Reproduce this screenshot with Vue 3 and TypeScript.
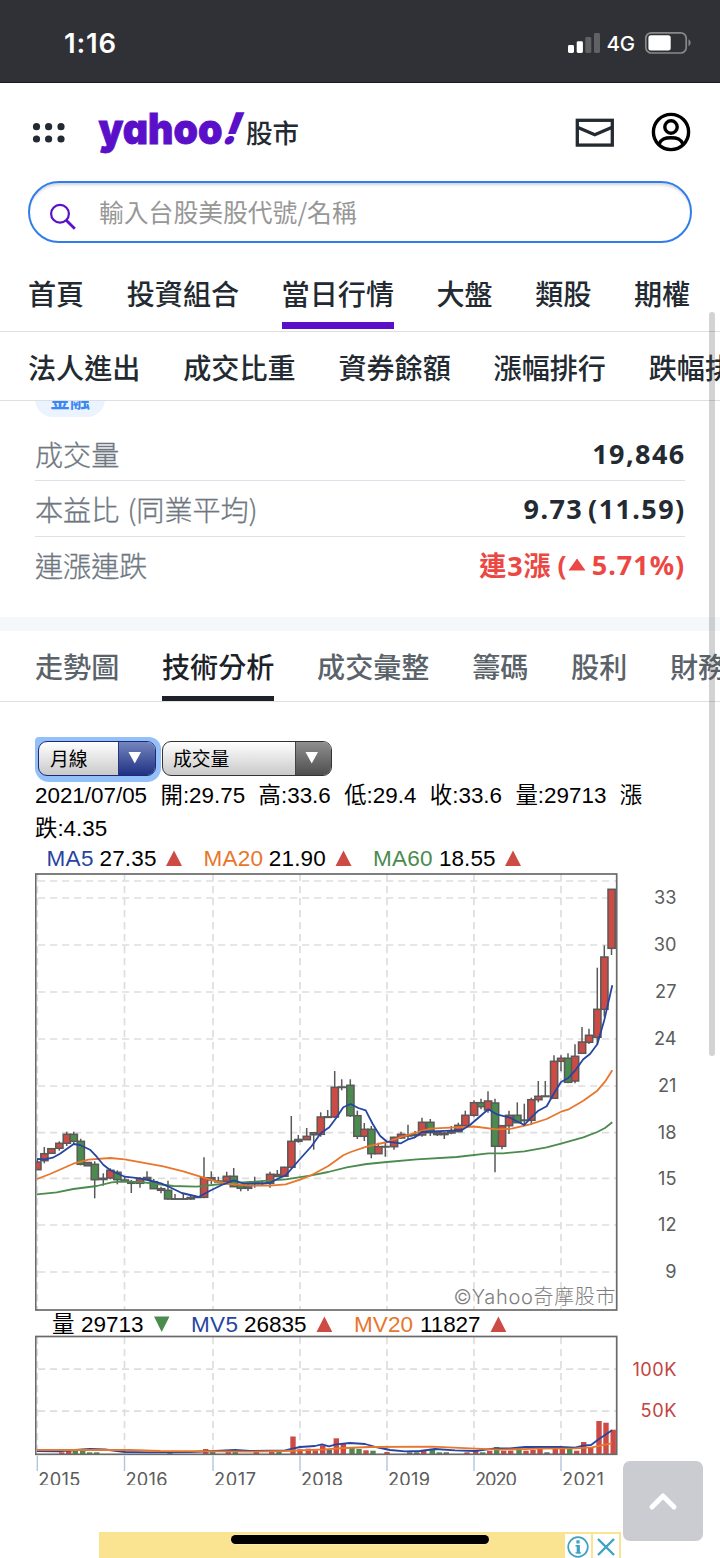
<script setup lang="ts">
type Tone = 'r' | 'g' | 'n'
interface Tab { label: string; active?: boolean }

const mainNav: Tab[] = [
  { label: '首頁' }, { label: '投資組合' }, { label: '當日行情', active: true },
  { label: '大盤' }, { label: '類股' }, { label: '期權' },
]
const subNav: string[] = ['法人進出', '成交比重', '資券餘額', '漲幅排行', '跌幅排行']
const tabs: Tab[] = [
  { label: '走勢圖' }, { label: '技術分析', active: true }, { label: '成交彙整' },
  { label: '籌碼' }, { label: '股利' }, { label: '財務' },
]

const fills: Record<Tone, string> = { r: '#cc4b45', g: '#4b8b4e', n: '#666' }

// x, body top, body bottom, high, low, tone
const candles: [number, number, number, number, number, Tone][] = [
  [37.3, 1162, 1169.7, 1160, 1170, 'r'], [44.3, 1153.7, 1160.7, 1147, 1163.3, 'r'], [51.3, 1148.7, 1153.3, 1148, 1154, 'r'],
  [59.3, 1143.3, 1148.3, 1141.3, 1150.7, 'r'], [66.7, 1134.3, 1143.3, 1131.7, 1146, 'r'], [73.7, 1134.3, 1141.3, 1131.7, 1144, 'g'],
  [80.7, 1141.3, 1164.3, 1138.7, 1165.3, 'g'], [87.7, 1162.5, 1165.8, 1162, 1166, 'n'], [94.7, 1164.3, 1179.7, 1161.3, 1198.3, 'g'],
  [103.3, 1178.3, 1179.5, 1173.3, 1185.7, 'n'], [110.3, 1170.3, 1178, 1168.3, 1179.3, 'r'], [117.3, 1172.3, 1179.7, 1170.3, 1184.3, 'g'],
  [124.7, 1180, 1181.7, 1177, 1182, 'n'], [131.3, 1181.7, 1183.3, 1180, 1193, 'n'], [140, 1178.7, 1183.3, 1177.3, 1187.7, 'r'],
  [147, 1177.5, 1179.3, 1171.3, 1180, 'n'], [153.7, 1181.7, 1188.7, 1179, 1189, 'g'], [161, 1188.7, 1190.3, 1186.7, 1193.3, 'n'],
  [168, 1190.3, 1199, 1180.7, 1200, 'g'], [175, 1198.8, 1199.2, 1194, 1200, 'n'], [183.3, 1198.8, 1199.2, 1193, 1200, 'n'],
  [190.7, 1197.5, 1199, 1194.7, 1200, 'n'], [197.3, 1197, 1197.5, 1196.5, 1198, 'n'], [204, 1177.7, 1197.3, 1157.3, 1198.3, 'r'],
  [211.3, 1177.8, 1180, 1171.3, 1184, 'n'], [218.3, 1181, 1182, 1176.7, 1183, 'n'], [226.7, 1176.3, 1181.3, 1171.7, 1182, 'r'],
  [233.7, 1176.3, 1186.7, 1168, 1187, 'g'], [240.7, 1185.3, 1188.3, 1184, 1191.3, 'g'], [248, 1185.3, 1188.3, 1184, 1191, 'n'],
  [254.7, 1182.9, 1183.5, 1176.7, 1187.7, 'n'], [262.3, 1183, 1183.4, 1180.3, 1184.7, 'n'], [270, 1174.3, 1183.5, 1171.7, 1187.7, 'r'],
  [277.3, 1174.5, 1176.5, 1170, 1177, 'n'], [284.3, 1167.3, 1176.3, 1166.7, 1177, 'r'], [291.3, 1141.3, 1167.3, 1116, 1168.3, 'r'],
  [298.3, 1139.5, 1141.3, 1135, 1142.7, 'n'], [306.7, 1136.3, 1139.7, 1128, 1140, 'r'], [313.7, 1132.7, 1134.8, 1132, 1149.7, 'n'],
  [320.7, 1117, 1134.3, 1112.3, 1136.7, 'r'], [327.7, 1116.8, 1117.4, 1110, 1118, 'n'], [334.7, 1087.3, 1117, 1071, 1118, 'r'],
  [341.7, 1087, 1087.5, 1079.3, 1090.3, 'n'], [350.3, 1085.3, 1115.7, 1079.3, 1117, 'g'], [357.3, 1115.7, 1136.3, 1110.7, 1139, 'g'],
  [364.3, 1129.3, 1136.3, 1123, 1141, 'r'], [371.3, 1129.3, 1153.7, 1126, 1158.3, 'g'], [378.3, 1146.7, 1153.7, 1142.7, 1154, 'r'],
  [385.3, 1146.5, 1147, 1142, 1156.7, 'n'], [394, 1137.3, 1146.7, 1136.7, 1149.7, 'r'], [401, 1134.3, 1138, 1131.7, 1139, 'r'],
  [408, 1135, 1136, 1124.7, 1139.3, 'n'], [415, 1134.3, 1135.5, 1131, 1137, 'n'], [422, 1122.3, 1135, 1117.7, 1136.7, 'r'],
  [430.3, 1122.3, 1132.7, 1119, 1136, 'g'], [437.3, 1132.8, 1134.6, 1132, 1136, 'n'], [444.3, 1133, 1134.6, 1132, 1139, 'n'],
  [451.3, 1130.8, 1133, 1126, 1134.3, 'n'], [458.3, 1125.3, 1131.7, 1122.7, 1132, 'r'], [465.3, 1115.3, 1125.7, 1110.7, 1126, 'r'],
  [474, 1102.7, 1115.3, 1100.3, 1116.7, 'r'], [481, 1102.7, 1106.7, 1098.7, 1109.3, 'g'], [488, 1101, 1110, 1091.3, 1112.7, 'r'],
  [495, 1103, 1146.3, 1098.7, 1172.3, 'g'], [502, 1125.7, 1146.3, 1125, 1149.3, 'r'], [509, 1115.3, 1125.7, 1110.7, 1134, 'r'],
  [517.3, 1115.3, 1122.7, 1102.3, 1123, 'g'], [524.3, 1120, 1120.6, 1103.7, 1125, 'n'], [531.3, 1099.7, 1120.3, 1097.7, 1125, 'r'],
  [538.3, 1096.3, 1099.7, 1081, 1102.3, 'r'], [545.3, 1096, 1096.6, 1081, 1097, 'n'], [554, 1061.3, 1098.3, 1055.3, 1099, 'r'],
  [561, 1058.3, 1061.3, 1055.3, 1071.3, 'r'], [568, 1058.3, 1082.3, 1053.3, 1083.3, 'g'], [575, 1056.3, 1081, 1044.3, 1083.3, 'r'],
  [582, 1042, 1053.3, 1027, 1054, 'r'], [589, 1035.3, 1042.3, 1028.7, 1044, 'r'], [597.3, 1009.3, 1037.3, 967.7, 1044, 'r'],
  [604.3, 957, 1009.3, 945.3, 1016.7, 'r'], [611.5, 889.3, 948.3, 889, 955, 'r'],
]

const ma5 = '37,1159 45,1159.3 52.7,1157.7 60,1153.7 73.7,1144 80,1145 90,1149.7 96.7,1156.7 103.3,1164.7 110.3,1170.3 124.7,1176.7 140,1178.3 151.7,1181 161,1183.3 168,1186.3 181.7,1193 198.7,1197 210,1190.7 221.7,1185 233.7,1180.3 243.3,1183.3 263.3,1183.7 270,1182.7 277.3,1179 285.7,1175.3 300,1159 311.7,1146 320.7,1133.3 329.3,1127.3 336,1118.3 343.3,1107.3 350.7,1104 358.3,1108 365.7,1110.3 372.7,1124 380,1135.7 387,1141.7 401,1143.3 408.3,1139.3 415,1137.3 422,1132 450,1130.7 462,1130 470,1125 488.3,1109.3 496.7,1114.3 510,1117.7 524.3,1125 531.3,1117.3 538.3,1110.7 546.7,1106.3 554,1093.3 561,1082 568,1078.3 575,1070.7 583.3,1059.3 590,1054 597.3,1044.3 604.3,1020 612.3,985.3'
const ma20 = '37,1179 50,1174 73.3,1163.7 88.3,1159.7 110.3,1158 124.7,1159.3 163.3,1166.3 183.3,1171.3 216.7,1181.7 230,1184 250,1185.7 270,1185.7 285.7,1184.3 300,1179.7 311.7,1175 328.3,1166 343.3,1155.3 350.7,1152 366.7,1146.7 387,1142 401,1137 430,1128.7 450,1127.7 474,1126.5 496.7,1129.3 511.7,1128.7 530,1124.3 546.7,1119 561,1111.7 568,1109.7 583.3,1100.7 597.3,1090.7 605,1081.7 612.3,1070.3'
const ma60 = '37,1194.3 56.7,1192.3 73.3,1189 96.7,1186 111.7,1182.3 124.7,1181.3 143.3,1182.3 173.3,1186 196.7,1186.7 221.7,1184 240,1182.7 250,1182 285.7,1179.3 310,1175.7 328.3,1172 346.7,1167.3 366.7,1164 387,1162 416.7,1159.3 456.7,1157 488.3,1153.3 503.3,1153.3 524.3,1151.3 546.7,1147.3 561,1143.7 583.3,1137.3 597.3,1132 605,1128 612.3,1122.3'

// x, bar top, tone
const volumes: [number, number, Tone][] = [
  [61.7, 1452.3, 'r'], [68.7, 1450.7, 'r'], [75.3, 1450.3, 'g'], [82.7, 1450.3, 'g'], [89.7, 1452.3, 'g'], [96.7, 1452.3, 'g'],
  [170, 1452.5, 'g'], [205.7, 1449, 'r'], [212.7, 1452, 'g'], [228.3, 1452, 'r'], [235.3, 1451.5, 'g'], [256.3, 1451.7, 'r'],
  [271.7, 1451.7, 'r'], [279, 1451.7, 'g'], [293, 1436.5, 'r'], [300, 1449.3, 'r'], [308.3, 1448.7, 'r'], [315.3, 1450.3, 'r'],
  [322.7, 1445.3, 'r'], [329.3, 1449.7, 'n'], [336.3, 1438.3, 'r'], [343.3, 1443.7, 'r'], [352, 1448, 'g'], [359, 1449, 'g'],
  [366, 1450.3, 'r'], [373, 1450.7, 'g'], [387, 1452, 'r'], [409.7, 1452.3, 'n'], [416.7, 1452.3, 'n'], [423.7, 1451, 'r'],
  [432.3, 1449.7, 'g'], [439.3, 1452.3, 'g'], [446.3, 1452.3, 'n'], [467, 1452.3, 'r'], [475.7, 1451, 'r'], [482.7, 1452.3, 'g'],
  [489.7, 1450.7, 'r'], [496.7, 1447, 'g'], [503.7, 1450.7, 'r'], [510.7, 1450.7, 'r'], [519, 1447.7, 'g'], [526, 1450.7, 'r'],
  [533, 1450, 'r'], [540, 1449, 'r'], [547, 1452.3, 'n'], [555.3, 1449, 'r'], [562.3, 1448.7, 'r'], [569.7, 1448.7, 'g'],
  [576.7, 1450.7, 'r'], [583.7, 1442, 'r'], [590.7, 1447, 'r'], [599, 1421, 'r'], [606, 1422.7, 'r'], [613.2, 1429.7, 'r'],
]
const mv5 = '37,1451 58,1451.3 75,1450 90,1449 105,1449.5 125,1452 150,1452.3 190,1452 215,1451 235,1450 250,1451 285,1450.3 300,1447 315,1446 322,1444.3 329,1446.3 336,1444.3 350,1443 365,1444 376,1447 390,1450 405,1451.3 420,1451 435,1449 455,1450.3 475,1451 495,1448.3 510,1448.3 525,1447 560,1447 575,1447.7 583,1445.7 591,1445 599,1439 612,1430.3'
const mv20 = '37,1450 130,1450 160,1451 250,1451.7 285,1451 325,1449.3 345,1448 370,1447 432,1446.7 470,1448.3 500,1449.7 540,1448.7 575,1448.3 592,1447.3 605,1444.7 612,1443.3'

const prices: [number, number][] = [
  [33, 898], [30, 945], [27, 992], [24, 1039], [21, 1086], [18, 1132.7], [15, 1178.3], [12, 1225], [9, 1272],
]
const years: [number, number][] = [
  [2015, 37.3], [2016, 124.5], [2017, 213], [2018, 300], [2019, 387], [2020, 474], [2021, 561],
]
</script>

<template>
  <main class="screen">
    <header class="status">
      <span class="clock">1:16</span>
      <div class="signals">
        <svg width="34" height="22" viewBox="0 0 34 22">
          <rect x="1" y="13" width="6" height="8" rx="1.4" fill="#fff" />
          <rect x="9.7" y="9.3" width="6.2" height="11.7" rx="1.4" fill="#fff" />
          <rect x="18.3" y="5" width="6" height="16" rx="1.4" fill="#606164" />
          <rect x="27" y="1" width="6" height="20" rx="1.4" fill="#606164" />
        </svg>
        <span class="net">4G</span>
        <svg width="48" height="24" viewBox="0 0 48 24">
          <rect x="1.8" y="1.8" width="40.4" height="20.2" rx="5.5" fill="none" stroke="#88898b" stroke-width="1.7" />
          <rect x="4.4" y="4.3" width="22.3" height="15.2" rx="2.5" fill="#fff" />
          <path d="M44.5 8.3c2.8 1.5 2.8 5.5 0 7z" fill="#88898b" />
        </svg>
      </div>
    </header>

    <div class="brandbar">
      <svg class="grid-icon" width="34" height="22" viewBox="0 0 34 22" fill="#232a31">
        <circle cx="4.5" cy="4.7" r="3.6" /><circle cx="16.6" cy="4.7" r="3.6" /><circle cx="29" cy="4.7" r="3.6" />
        <circle cx="4.5" cy="17" r="3.6" /><circle cx="16.6" cy="17" r="3.6" /><circle cx="29" cy="17" r="3.6" />
      </svg>
      <svg class="logo" width="148" height="50" viewBox="0 0 148 50">
        <text x=".5" y="37" textLength="124" lengthAdjust="spacingAndGlyphs" class="logo-text">yahoo</text>
        <text class="logo-text bang" transform="translate(122 37) skewX(-21) scale(.98 1.03)">!</text>
      </svg>
      <span class="brand-sub">股市</span>
      <svg class="mail" width="40" height="30" viewBox="0 0 40 30" fill="none" stroke="#232a31" stroke-width="3.3">
        <rect x="2.3" y="2.3" width="35" height="24.8" />
        <path d="M3 9.6l16.8 7.2L36.6 9.6" />
      </svg>
      <svg class="user" width="40" height="40" viewBox="0 0 40 40" fill="none" stroke="#000" stroke-width="3.4">
        <circle cx="20" cy="20" r="17.6" />
        <circle cx="20" cy="15" r="6.2" />
        <path d="M8 32c2.5-5 5.5-6.3 12-6.3S29.5 27 32 32" />
      </svg>
    </div>

    <div class="search">
      <svg width="28" height="28" viewBox="0 0 28 28" fill="none" stroke="#5a0fc8">
        <circle cx="11" cy="10.7" r="8.9" stroke-width="2.2" />
        <path d="M17 17l8.8 8.8" stroke-width="2.8" />
      </svg>
      <span>輸入台股美股代號/名稱</span>
    </div>

    <nav class="mainnav">
      <a v-for="t in mainNav" :key="t.label" :class="{ active: t.active }"><span>{{ t.label }}</span></a>
    </nav>
    <nav class="subnav"><a v-for="s in subNav" :key="s">{{ s }}</a></nav>

    <section class="quote">
      <div class="pillbox"><span class="pill">金融</span></div>
      <div class="row"><span>成交量</span><b>19,846</b></div>
      <div class="row"><span>本益比 (同業平均)</span><b>9.73<i></i>(11.59)</b></div>
      <div class="row up">
        <span>連漲連跌</span>
        <b>連3漲<i></i>(<svg width="18" height="14" viewBox="0 0 18 14"><path d="M.5 12.5L9 .5l8.5 12z" fill="#eb4844" /></svg><i></i>5.71%)</b>
      </div>
    </section>

    <nav class="tabs">
      <a v-for="t in tabs" :key="t.label" :class="{ active: t.active }">{{ t.label }}</a>
    </nav>

    <section class="technical">
      <div class="selects">
        <div class="focus"><div class="select blue"><span>月線</span><em><svg width="14" height="12"><path d="M.5 0h12.5l-6.25 11.5z" fill="#fff" /></svg></em></div></div>
        <div class="select gray"><span>成交量</span><em><svg width="14" height="12"><path d="M.5 0h12.5l-6.25 11.5z" fill="#fff" /></svg></em></div>
      </div>
      <p class="info">2021/07/05&nbsp; 開:29.75&nbsp; 高:33.6&nbsp; 低:29.4&nbsp; 收:33.6&nbsp; 量:29713&nbsp; 漲<br>跌:4.35</p>

      <svg class="chart" width="650" height="643" viewBox="35 842 650 643">
        <g class="legend">
          <text x="46.5" y="866" textLength="47" fill="#2645a0">MA5</text><text x="99.5" y="866" textLength="57">27.35</text>
          <text x="203.5" y="866" textLength="59.5" fill="#e8762c">MA20</text><text x="268.8" y="866" textLength="57">21.90</text>
          <text x="373" y="866" textLength="59.5" fill="#4b8b4e">MA60</text><text x="439" y="866" textLength="56.5">18.55</text>
          <path d="M166 866l8-15.500 8 15.500zM335.500 866l8-15.500 8 15.500zM505 866l8-15.500 8 15.500z" fill="#cc4b45" />
        </g>

        <g class="gridlines">
          <path d="M38 881H616" />
          <path v-for="[p, y] in prices" :key="p" :d="`M38 ${y}H616`" />
          <path v-for="[n, x] in years" :key="n" :d="`M${x} 874V1310`" />
        </g>
        <text x="615.5" y="1304" text-anchor="end" textLength="162" class="mark">©Yahoo奇摩股市</text>
        <g v-for="[x, top, bottom, high, low, tone] in candles" :key="x" stroke="#595959">
          <path :d="`M${x} ${high}V${low}`" stroke-width="1.5" />
          <rect :x="x - 3.5" :y="top" width="7.2" :height="bottom - top" :fill="fills[tone]" stroke-width="1.5" />
        </g>
        <g class="lines">
          <polyline :points="ma60" stroke="#4b8b4e" />
          <polyline :points="ma20" stroke="#e8762c" />
          <polyline :points="ma5" stroke="#2645a0" />
        </g>
        <rect x="35.7" y="874" width="581" height="436" class="frame" />

        <g class="legend">
          <text x="52" y="1332">量</text><text x="81" y="1332" textLength="62.5">29713</text>
          <text x="191" y="1332" textLength="47" fill="#2645a0">MV5</text><text x="244" y="1332" textLength="62.5">26835</text>
          <text x="354" y="1332" textLength="59" fill="#e8762c">MV20</text><text x="420" y="1332" textLength="60.5">11827</text>
          <path d="M154 1316.500h15.500l-7.800 15.500z" fill="#4b8b4e" />
          <path d="M316.500 1332l7.900-15.500 7.900 15.500zM490.500 1332l7.900-15.500 7.900 15.500z" fill="#cc4b45" />
        </g>

        <g class="gridlines">
          <path d="M38 1369.200H616M38 1411.200H616" />
          <path v-for="[n, x] in years" :key="n" :d="`M${x} 1337V1453`" />
        </g>
        <rect v-for="[x, top, tone] in volumes" :key="x" :x="x - 2.7" :y="top" width="5.4" :height="1454 - top" :fill="fills[tone]" />
        <g class="lines">
          <polyline :points="mv5" stroke="#2645a0" />
          <polyline :points="mv20" stroke="#e8762c" />
        </g>
        <rect x="35.7" y="1336.5" width="581" height="117.8" class="frame" />

        <g class="axis">
          <text v-for="[p, y] in prices" :key="p" x="676.5" :y="y + 6.3" text-anchor="end">{{ p }}</text>
          <text x="676.5" y="1375.6" text-anchor="end" fill="#c4443f" textLength="44">100K</text>
          <text x="676.5" y="1417.3" text-anchor="end" fill="#c4443f" textLength="36">50K</text>
          <g v-for="[n, x] in years" :key="n">
            <path :d="`M${x} 1455.500V1471`" stroke="#b4c6dc" stroke-width="1.4" />
            <text :x="x + 1" y="1486.4" textLength="42">{{ n }}</text>
          </g>
        </g>
      </svg>
    </section>

    <footer class="ad">
      <span class="ad-icon">
        <svg width="22" height="22" viewBox="0 0 22 22" fill="none" stroke="#3fa2c4"><circle cx="11" cy="11" r="9.8" stroke-width="1.7" /><path d="M11 4.3v3.2M11.3 9v8.5" stroke-width="3.2" /><path d="M8.500 9.700h3M8.500 16.900h5.500" stroke-width="1.4" /></svg>
      </span>
      <span class="ad-icon">
        <svg width="22" height="22" viewBox="0 0 22 22" fill="none" stroke="#3fa2c4" stroke-width="2.4"><path d="M3 3l16 16M19 3L3 19" /></svg>
      </span>
    </footer>

    <div class="scrollbar"></div>
    <button class="to-top" aria-label="top">
      <svg width="30" height="20" viewBox="0 0 30 20"><path d="M4 16L15 5l11 11" fill="none" stroke="#fff" stroke-width="5" stroke-linecap="round" stroke-linejoin="round" /></svg>
    </button>
    <div class="home"></div>
  </main>
</template>

<style>
body { margin: 0; background: #fff; }
</style>

<style scoped>
* { box-sizing: border-box; }
.screen { position: relative; width: 720px; height: 1558px; overflow: hidden; background: #fff; color: #232a31; font-family: "Noto Sans", "Noto Sans CJK TC", sans-serif; display: flex; flex-direction: column; }
.screen > * { flex-shrink: 0; }
.status { height: 83px; background: #303136; border-bottom: 1px solid #1b1c1f; display: flex; justify-content: space-between; align-items: center; padding: 4px 28.5px 0 64px; color: #fff; font-family: Inter, sans-serif; }
.clock { font-size: 27.5px; font-weight: 600; letter-spacing: .8px; }
.signals { display: flex; align-items: center; }
.net { font-size: 20.5px; font-weight: 500; margin: 1px 8px 0 6px; width: 29px; letter-spacing: -.1px; }
.brandbar { height: 98px; display: flex; align-items: center; padding: 0 28px; }
.grid-icon { margin: 1px 0 0 4px; }
.logo { margin: 0 0 0 32px; overflow: visible; }
.logo-text { font: 900 42.5px Inter, sans-serif; font-feature-settings: "cv11" 1; fill: #5a0fc8; stroke: #5a0fc8; stroke-width: .8px; }
.bang { stroke-width: 0; }
.brand-sub { font-size: 26.5px; font-weight: 500; line-height: 40px; font-family: "Noto Sans CJK TC", sans-serif; margin: 0 0 1px; }
.mail { margin: 1px 0 0 auto; }
.user { margin: 0 1px 0 36px; }
.search { height: 62px; margin: 0 28px; border: 2px solid #2f7eea; border-radius: 31px; box-shadow: inset 0 4px 3px -2px #d3d3d8; display: flex; align-items: center; padding: 0 19px; color: #979797; font: 400 24.8px "Noto Sans CJK TC", sans-serif; }
.search svg { margin-top: 10px; }
.search span { margin: -2px 0 0 22px; }
.mainnav, .subnav, .tabs { display: flex; gap: 42.5px; padding-left: 28px; white-space: nowrap; font: 500 28.1px/40px "Noto Sans CJK TC", sans-serif; border-bottom: 1px solid #dcdfe4; overflow: hidden; }
.mainnav { height: 88.5px; padding-top: 30px; }
.mainnav a.active { border-bottom: 7px solid #5a0fc8; height: 55.5px; }
.subnav { height: 69.5px; padding-top: 15px; gap: 42.8px; }
.quote { height: 230px; padding: 0 35px; border-bottom: 14px solid #f5f7f9; }
.pillbox { height: 27px; overflow: hidden; display: flex; align-items: flex-start; }
.pill { width: 70px; height: 36px; margin-top: -20px; border-radius: 18px; background: #ebf3ff; color: #3a86f2; font: 700 20px/37px "Noto Sans CJK TC", sans-serif; text-align: center; }
.row { height: 56px; display: flex; justify-content: space-between; align-items: center; border-bottom: 1px solid #dde1ea; }
.row:nth-child(2) { height: 53px; padding-bottom: 1px; }
.row span { color: #6e7780; font: 300 28.1px/40px "Noto Sans CJK TC", sans-serif; -webkit-text-stroke: .3px #6e7780; word-spacing: 2px; }
.row b { font-size: 27px; letter-spacing: 1.4px; margin-right: -.6px; display: flex; align-items: center; font-family: "Noto Sans", "Noto Sans CJK TC", sans-serif; }
.row i { width: 5px; }
.row.up { border: 0; height: 55px; }
.row.up b { color: #eb4844; letter-spacing: 1px; margin-right: -.2px; }
.row.up i { width: 6px; }
.tabs { height: 71px; padding: 15px 0 0 35px; color: #5b636a; gap: 42.7px; }
.tabs a.active { color: #1d2228; border-bottom: 5px solid #1d2228; height: 55px; }
.technical { height: 830px; padding: 35px 35px 0; }
.selects { display: flex; height: 44px; align-items: flex-start; }
.focus { width: 125.5px; height: 45px; padding: 4px 5px 6px 3px; border-radius: 4px 12px 14px 14px; background: #94c0fa; }
.select { display: flex; height: 34.5px; border-radius: 9px; overflow: hidden; border: 1.5px solid #333; background: linear-gradient(#fff, #c9c9c9); color: #000; font: 400 18.8px/31px "Noto Sans CJK TC", sans-serif; }
.select span { flex: 1; padding-left: 10px; }
.select em { width: 36.5px; padding: 0 3px 0 0; display: flex; align-items: center; justify-content: center; background: linear-gradient(#8f8f8f, #4e4e4e); border-left: 1px solid #444; }
.blue { border-color: #1d2a78; }
.blue span { padding-left: 11px; }
.blue em { background: linear-gradient(#7585bd, #1f3184); border-color: #26377f; }
.gray { margin: 4px 0 0 1.5px; width: 170px; }
.info { margin: -2px 0 0; height: 63px; font: 22.4px/33px "Liberation Sans", "Noto Sans CJK TC", sans-serif; word-spacing: .5px; color: #000; white-space: nowrap; }
.chart { display: block; }
.legend { font: 22.5px "Liberation Sans", "Noto Sans CJK TC", sans-serif; fill: #000; }
.gridlines path { stroke: #dedede; stroke-width: 1.7; stroke-dasharray: 7.2 4.8; fill: none; }
.frame { fill: none; stroke: #6a6a6a; stroke-width: 1.7; }
.lines { fill: none; stroke-width: 1.8; stroke-linejoin: round; }
.mark { font: 300 20px Inter, "Noto Sans CJK TC", sans-serif; fill: #7d7d7d; }
.axis { font: 400 18.2px Inter, sans-serif; fill: #5c5c5c; }
.ad { height: 26px; width: 522px; margin: 0 0 0 99px; background: #fbe491; display: flex; gap: 2px; justify-content: flex-end; padding: 2px 2px 0 0; }
.ad-icon { width: 26px; height: 26px; background: #fff; display: flex; align-items: center; justify-content: center; }
.scrollbar { position: absolute; left: 709px; top: 312px; width: 6px; height: 744px; border-radius: 3px; background: rgba(80, 80, 80, .25); }
.to-top { position: absolute; left: 622.5px; top: 1460.5px; width: 80px; height: 80px; border: 0; padding: 0 0 0 1px; border-radius: 7px; background: #cbccd2; display: flex; align-items: center; justify-content: center; }
.home { position: absolute; left: 231px; top: 1535px; width: 258px; height: 9px; border-radius: 5px; background: #000; box-shadow: 0 0 0 .5px #fbf0c0; }
</style>
